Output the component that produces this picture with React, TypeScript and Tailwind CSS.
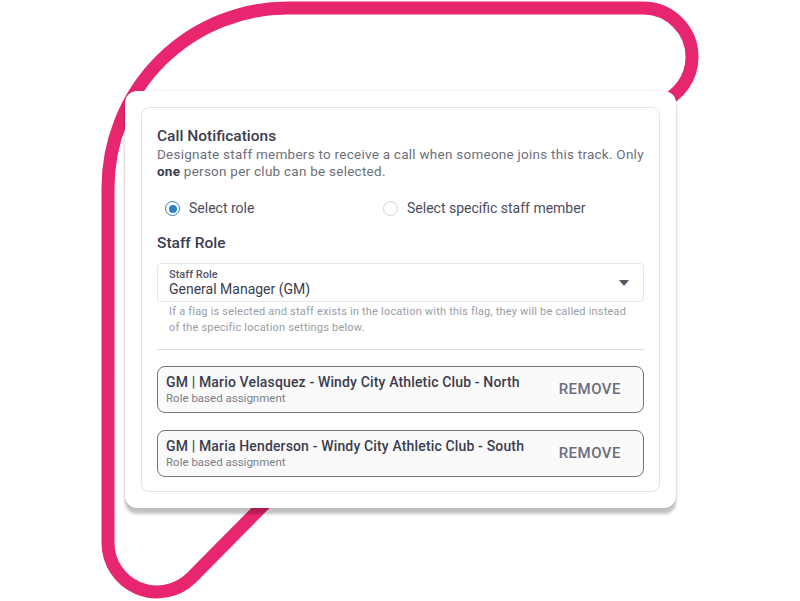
import React from 'react'

const font = { fontFamily: 'Roboto, "Liberation Sans", sans-serif' }

function Swoosh() {
  return (
    <svg className="absolute inset-0" width="800" height="601" viewBox="0 0 800 601" fill="none">
      <path
        d="M 300 468 L 191.6 577.6 A 49 49 0 0 1 108 543 L 108 188 A 180 180 0 0 1 288 8 L 643 8 A 49 49 0 0 1 692 57 A 49 49 0 0 1 660 103"
        stroke="#e8256f"
        strokeWidth="13"
        strokeLinecap="round"
        strokeLinejoin="round"
      />
    </svg>
  )
}

function Radio({ checked, label }: { checked?: boolean; label: string }) {
  return (
    <label className="flex items-center gap-[9px]">
      <span
        className={
          checked
            ? 'flex h-[15px] w-[15px] items-center justify-center rounded-full border-[1.5px] border-[#2f80c3]'
            : 'h-[15px] w-[15px] rounded-full border border-[#d6d6d6]'
        }
      >
        {checked && <span className="h-[8px] w-[8px] rounded-full bg-[#2f80c3]" />}
      </span>
      <span className="text-[14px] text-[#4b4d5b]">{label}</span>
    </label>
  )
}

function Assignment({ title }: { title: string }) {
  return (
    <div className="flex h-[47px] items-center justify-between rounded-lg border border-[#71737f] bg-[#fafafa] pl-[8px] pr-[22px]">
      <div className="flex flex-col">
        <div className="text-[14px] font-medium leading-[18px] tracking-[0.15px] text-[#3b3d4f]">{title}</div>
        <div className="text-[11.5px] leading-[15px] text-[#7b7d88]">Role based assignment</div>
      </div>
      <button className="text-[15px] font-medium tracking-[0.5px] text-[#6b6d7a]">REMOVE</button>
    </div>
  )
}

export default function App() {
  return (
    <div className="relative h-[601px] w-[800px] overflow-hidden bg-white pl-[125px] pt-[91px]" style={font}>
      <Swoosh />
      <div className="relative w-[551px] rounded-[12px] bg-white p-4 shadow-[0_6px_3px_rgba(0,0,0,0.24),0_0_3px_rgba(0,0,0,0.1)]">
        <div className="rounded-lg border border-[#e3e3e3] px-[15px] pb-[14px] pt-[18px]">
          <h2 className="text-[15.5px] font-medium leading-[20px] text-[#3b3d4f]">Call Notifications</h2>
          <p className="mr-[-8px] text-[13.5px] leading-[16.5px] tracking-[0.25px] text-[#6d6f7b]">
            Designate staff members to receive a call when someone joins this track. Only{' '}
            <b className="font-bold text-[#3b3d4f]">one</b> person per club can be selected.
          </p>
          <div className="mt-[19px] flex items-center pl-[8px]">
            <div className="w-[218px]">
              <Radio checked label="Select role" />
            </div>
            <Radio label="Select specific staff member" />
          </div>
          <h3 className="mt-[14px] text-[15.5px] font-medium leading-[20px] text-[#3b3d4f]">Staff Role</h3>
          <div className="mt-[10px] flex h-[39px] items-center justify-between rounded-[4px] border border-[#e6e6e6] pl-[11px] pr-[14px]">
            <div className="flex flex-col">
              <span className="text-[11px] font-medium leading-[13px] text-[#555866]">Staff Role</span>
              <span className="text-[14px] leading-[17px] text-[#3b3d4f]">General Manager (GM)</span>
            </div>
            <svg width="10" height="6" viewBox="0 0 10 6">
              <path d="M0 0 L10 0 L5 6 Z" fill="#555866" />
            </svg>
          </div>
          <p className="mt-[2px] pl-[12px] pr-[12px] text-[11px] leading-[16px] tracking-[0.2px] text-[#9a9ca6]">
            If a flag is selected and staff exists in the location with this flag, they will be called instead of the specific location settings below.
          </p>
          <div className="mt-[13px] h-px bg-[#dedede]" />
          <div className="mt-[16px] flex flex-col gap-[17px]">
            <Assignment title="GM | Mario Velasquez - Windy City Athletic Club - North" />
            <Assignment title="GM | Maria Henderson - Windy City Athletic Club - South" />
          </div>
        </div>
      </div>
    </div>
  )
}
